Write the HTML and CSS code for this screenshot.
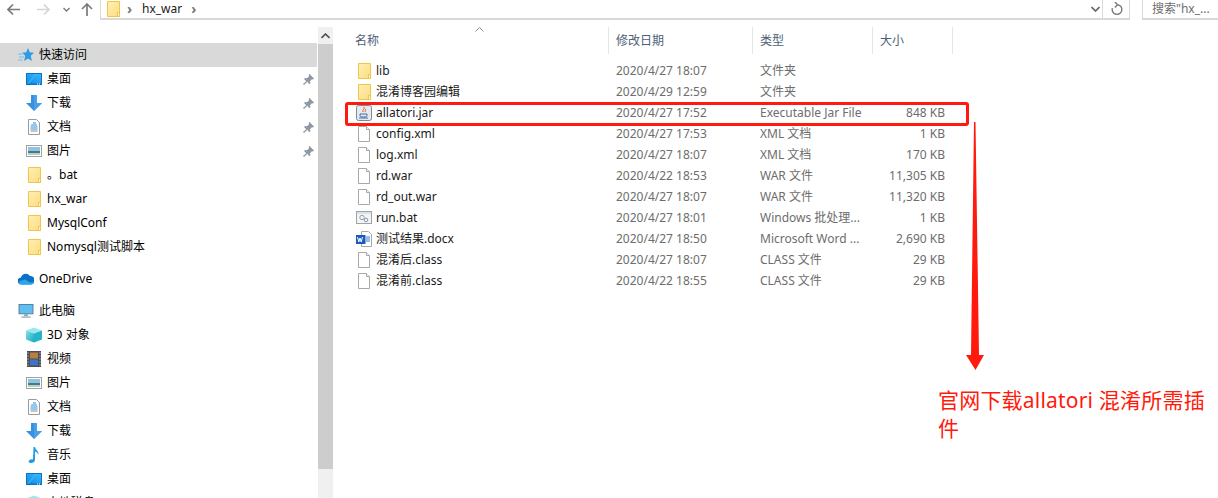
FILE: index.html
```html
<!DOCTYPE html>
<html lang="zh-CN">
<head>
<meta charset="utf-8">
<title>hx_war</title>
<link rel="stylesheet" href="styles.css">
</head>
<body>
<svg class="defs" width="0" height="0" aria-hidden="true">
  <defs>
    <linearGradient id="fg" x1="0" y1="0" x2="1" y2="1"><stop offset="0" stop-color="#fff0b4"/><stop offset="1" stop-color="#fcdc80"/></linearGradient>
    <linearGradient id="dg" x1="0" y1="1" x2="1" y2="0"><stop offset="0" stop-color="#0b8de8"/><stop offset="1" stop-color="#38b6fc"/></linearGradient>
    <linearGradient id="cg" x1="0" y1="0" x2="1" y2="1"><stop offset="0" stop-color="#7fe3e8"/><stop offset="1" stop-color="#1ba7bd"/></linearGradient>
    <symbol id="folder" viewBox="0 0 16 16"><path d="M2.500.5h12v15h-12z" fill="url(#fg)" stroke="#eec64c"/><path d="M12.500 11.500h2v4h-2z" fill="#fff3c8" stroke="#eec64c"/></symbol>
    <symbol id="page" viewBox="0 0 16 16"><path d="M2.500.5h8l3 3v12h-11z" fill="#fff" stroke="#a8a8a8"/><path d="M10.500.5v3h3" fill="#f4f4f4" stroke="#a8a8a8"/></symbol>
    <symbol id="star" viewBox="0 0 16 14"><path d="M10 0l1.800 4.300 4.200.4-3.200 3 1 5.300-3.800-2.500L6.200 13l1-5.300-3-3 4-.4z" fill="#2e9be6"/><path d="M0 6h4.500M1 9h5M0 12h4.500" stroke="#6fbdf0"/></symbol>
    <symbol id="desktop" viewBox="0 0 16 12"><rect width="16" height="12" fill="#0c73c4"/><rect x="1" y="1" width="14" height="9.500" fill="url(#dg)"/><path d="M1 10.500L10 1h1L3 10.500z" fill="#63c4fb" opacity=".6"/><path d="M11 11h1M13 11h1" stroke="#fff"/></symbol>
    <symbol id="down" viewBox="0 0 16 16"><path d="M5 0h6v8h5l-8 8-8-8h5z" fill="#3b8fdf"/><path d="M8 0h3v8h5l-8 8z" fill="#4a9fe9"/></symbol>
    <symbol id="doc" viewBox="0 0 16 16"><path d="M2.500.5h8l3 3v12h-11z" fill="#fff" stroke="#9a9a9a"/><path d="M7 4h3M5 6h6M4.500 8h7M4.500 10h7" stroke="#2f8fdb"/><path d="M4.500 12h7" stroke="#8a8a8a"/></symbol>
    <symbol id="pic" viewBox="0 0 16 12"><rect x=".5" y=".5" width="15" height="11" fill="#fff" stroke="#a2a2a2"/><rect x="2" y="2" width="12" height="4" fill="#8fc3ea"/><rect x="2" y="6" width="12" height="2" fill="#4f7c6a"/><rect x="2" y="8" width="12" height="2" fill="#b7cdd6"/></symbol>
    <symbol id="pin" viewBox="0 0 11 11"><path d="M6.500 0l4.500 4.500-1 1-1-.3-2 2 .3 2-1 1-2-2.500L1 11 0 10l3.200-2.800L1 5l1-1 2 .3 2-2L5.700.8z" fill="#8f9aa5"/></symbol>
    <symbol id="cloud" viewBox="0 0 16 11"><path d="M3.500 11A3.500 3.500 0 0 1 3 4a5 5 0 0 1 9-1.500A4 4 0 0 1 13 11z" fill="#0f6fc6"/><path d="M3.500 11C1 11 0 8.500 2 7.500l5-1.500 5 3 3.800-.5c.5 1.500-.8 2.500-2.800 2.500z" fill="#28a8ea"/></symbol>
    <symbol id="pc" viewBox="0 0 16 15"><rect x=".5" y=".5" width="15" height="10" fill="#5fc0f0" stroke="#4f7f9c"/><path d="M6 11h4v2H6z" fill="#8aa3b3"/><path d="M3 13.500h10v1H3z" fill="#6e8797"/></symbol>
    <symbol id="cube" viewBox="0 0 16 15"><path d="M8 0l8 3-8 3-8-3z" fill="#9be9ee"/><path d="M0 3l8 3v9l-8-3z" fill="url(#cg)"/><path d="M16 3l-8 3v9l8-3z" fill="#25b4c8"/></symbol>
    <symbol id="video" viewBox="0 0 16 16"><rect x="1" width="14" height="16" fill="#4b4f55"/><rect x="4" y="1.500" width="8" height="6" fill="#b77f3f"/><rect x="4" y="8.500" width="8" height="6" fill="#3f74c4"/><path d="M2 1.500v1M2 4.500v1M2 7.500v1M2 10.500v1M2 13.500v1M14 1.500v1M14 4.500v1M14 7.500v1M14 10.500v1M14 13.500v1" stroke="#ddd"/></symbol>
    <symbol id="music" viewBox="0 0 16 16"><path d="M7.500 0h1.500c.5 3 4 4 3.500 8-.5-2-2-3-3.500-3.500V13c0 2-2 3-4 3-2.500 0-3-2-1.500-3 1-.8 2.500-1 3.500-.5z" fill="#1f9be8"/></symbol>
    <symbol id="jar" viewBox="0 0 16 16"><rect x=".5" y=".5" width="15" height="15" rx="2" fill="#e6eaf0" stroke="#7d8998"/><path d="M8 2c1 2-2 3-1 5M10 4c-1 1-1 2-.5 3" stroke="#d9651c" fill="none"/><path d="M4 9h7v1.500c0 1-1 1.500-3.500 1.500S4 11.500 4 10.500zM3 13h9" stroke="#3f6d9c" fill="none"/></symbol>
    <symbol id="bat" viewBox="0 0 16 16"><rect x=".5" y="1.500" width="15" height="12" fill="#f4f4f4" stroke="#9ca3aa"/><rect x="1" y="2" width="14" height="2" fill="#d9e2ea"/><circle cx="6" cy="7.500" r="2.200" fill="none" stroke="#98a1a8"/><circle cx="10" cy="10" r="1.800" fill="none" stroke="#7f9bb5"/></symbol>
    <symbol id="word" viewBox="0 0 16 16"><path d="M5.500.5h7l3 3v12h-10z" fill="#fff" stroke="#a8a8a8"/><path d="M10 6h4M10 8h4M10 10h4" stroke="#2b7cd3"/><rect y="4" width="9.500" height="9" fill="#185abd"/><path d="M1.500 6l1.300 5 1.200-4 1.200 4 1.300-5" stroke="#fff" fill="none"/></symbol>
    <symbol id="close-up" viewBox="0 0 9 6"><path d="M.5 5l4-4 4 4" fill="none" stroke="#505050" stroke-width="1.600"/></symbol>
  </defs>
</svg>

<div class="window">
  <header class="toolbar">
    <div class="nav-buttons">
      <svg class="nav-btn back" viewBox="0 0 13 12"><path d="M6 1L1 6l5 5M1 6h12" fill="none" stroke="currentColor" stroke-width="1.700"/></svg>
      <svg class="nav-btn forward" viewBox="0 0 13 12"><path d="M7 1l5 5-5 5M12 6H0" fill="none" stroke="currentColor" stroke-width="1.700"/></svg>
      <svg class="nav-drop" viewBox="0 0 7 5"><path d="M.5 1l3 3 3-3" fill="none" stroke="currentColor" stroke-width="1.400"/></svg>
      <svg class="nav-btn up" viewBox="0 0 12 13"><path d="M1 6l5-5 5 5M6 1v12" fill="none" stroke="currentColor" stroke-width="1.700"/></svg>
    </div>
    <div class="address">
      <svg class="addr-folder"><use href="#folder"/></svg>
      <span class="crumb-sep">›</span>
      <span class="crumb">hx_war</span>
      <span class="crumb-sep">›</span>
      <svg class="addr-drop" viewBox="0 0 9 6"><path d="M.5 1l4 4 4-4" fill="none" stroke="currentColor" stroke-width="1.700"/></svg>
      <svg class="addr-refresh" viewBox="0 0 12 13"><path d="M6.500 2.500a4.500 4.500 0 1 1-4.300 3.200M4.500 0l2.500 2.500L4.500 5" fill="none" stroke="currentColor" stroke-width="1.300"/></svg>
    </div>
    <div class="search">搜索"hx_...</div>
  </header>

  <div class="main">
    <nav class="sidebar">
      <section class="group">
        <div class="row top active"><svg class="ico-top"><use href="#star"/></svg>快速访问</div>
        <div class="row"><svg class="ico d12"><use href="#desktop"/></svg>桌面<svg class="pin"><use href="#pin"/></svg></div>
        <div class="row"><svg class="ico"><use href="#down"/></svg>下载<svg class="pin"><use href="#pin"/></svg></div>
        <div class="row"><svg class="ico"><use href="#doc"/></svg>文档<svg class="pin"><use href="#pin"/></svg></div>
        <div class="row"><svg class="ico d12"><use href="#pic"/></svg>图片<svg class="pin"><use href="#pin"/></svg></div>
        <div class="row"><svg class="ico"><use href="#folder"/></svg>。bat</div>
        <div class="row"><svg class="ico"><use href="#folder"/></svg>hx_war</div>
        <div class="row"><svg class="ico"><use href="#folder"/></svg>MysqlConf</div>
        <div class="row"><svg class="ico"><use href="#folder"/></svg>Nomysql测试脚本</div>
      </section>
      <section class="group">
        <div class="row top"><svg class="ico-top"><use href="#cloud"/></svg>OneDrive</div>
      </section>
      <section class="group">
        <div class="row top"><svg class="ico-top"><use href="#pc"/></svg>此电脑</div>
        <div class="row"><svg class="ico"><use href="#cube"/></svg>3D 对象</div>
        <div class="row"><svg class="ico"><use href="#video"/></svg>视频</div>
        <div class="row"><svg class="ico d12"><use href="#pic"/></svg>图片</div>
        <div class="row"><svg class="ico"><use href="#doc"/></svg>文档</div>
        <div class="row"><svg class="ico"><use href="#down"/></svg>下载</div>
        <div class="row"><svg class="ico"><use href="#music"/></svg>音乐</div>
        <div class="row"><svg class="ico d12"><use href="#desktop"/></svg>桌面</div>
        <div class="row"><svg class="ico"><use href="#cube"/></svg>本地磁盘 (C:)</div>
      </section>
    </nav>

    <div class="scrollbar">
      <div class="scroll-up"><svg class="scroll-arrow"><use href="#close-up"/></svg></div>
      <div class="scroll-thumb"></div>
      <div class="scroll-track"></div>
    </div>

    <section class="list">
      <div class="list-head">
        <div class="h-cell h-name">名称<svg class="sort" viewBox="0 0 9 5"><path d="M.5 4.500l4-4 4 4" fill="none" stroke="#8a8a8a"/></svg></div>
        <div class="h-cell">修改日期</div>
        <div class="h-cell">类型</div>
        <div class="h-cell">大小</div>
      </div>
      <div class="file"><span class="f-name"><svg class="ico"><use href="#folder"/></svg>lib</span><span class="f-date">2020/4/27 18:07</span><span class="f-type">文件夹</span><span class="f-size"></span></div>
      <div class="file"><span class="f-name"><svg class="ico"><use href="#folder"/></svg>混淆博客园编辑</span><span class="f-date">2020/4/29 12:59</span><span class="f-type">文件夹</span><span class="f-size"></span></div>
      <div class="file"><span class="f-name"><svg class="ico"><use href="#jar"/></svg>allatori.jar</span><span class="f-date">2020/4/27 17:52</span><span class="f-type">Executable Jar File</span><span class="f-size">848 KB</span></div>
      <div class="file"><span class="f-name"><svg class="ico"><use href="#page"/></svg>config.xml</span><span class="f-date">2020/4/27 17:53</span><span class="f-type">XML 文档</span><span class="f-size">1 KB</span></div>
      <div class="file"><span class="f-name"><svg class="ico"><use href="#page"/></svg>log.xml</span><span class="f-date">2020/4/27 18:07</span><span class="f-type">XML 文档</span><span class="f-size">170 KB</span></div>
      <div class="file"><span class="f-name"><svg class="ico"><use href="#page"/></svg>rd.war</span><span class="f-date">2020/4/22 18:53</span><span class="f-type">WAR 文件</span><span class="f-size">11,305 KB</span></div>
      <div class="file"><span class="f-name"><svg class="ico"><use href="#page"/></svg>rd_out.war</span><span class="f-date">2020/4/27 18:07</span><span class="f-type">WAR 文件</span><span class="f-size">11,320 KB</span></div>
      <div class="file"><span class="f-name"><svg class="ico"><use href="#bat"/></svg>run.bat</span><span class="f-date">2020/4/27 18:01</span><span class="f-type">Windows 批处理...</span><span class="f-size">1 KB</span></div>
      <div class="file"><span class="f-name"><svg class="ico"><use href="#word"/></svg>测试结果.docx</span><span class="f-date">2020/4/27 18:50</span><span class="f-type">Microsoft Word ...</span><span class="f-size">2,690 KB</span></div>
      <div class="file"><span class="f-name"><svg class="ico"><use href="#page"/></svg>混淆后.class</span><span class="f-date">2020/4/27 18:07</span><span class="f-type">CLASS 文件</span><span class="f-size">29 KB</span></div>
      <div class="file"><span class="f-name"><svg class="ico"><use href="#page"/></svg>混淆前.class</span><span class="f-date">2020/4/22 18:55</span><span class="f-type">CLASS 文件</span><span class="f-size">29 KB</span></div>
    </section>
  </div>

  <div class="mark-box"></div>
  <svg class="mark-arrow" viewBox="0 0 18 248"><path d="M8 0h1.500L13 233h5l-8.500 15L0 233h5z" fill="#ff1a0d"/></svg>
  <p class="mark-note">官网下载allatori 混淆所需插件</p>
</div>
</body>
</html>
```

FILE: styles.css
```css
* { box-sizing: border-box; }
html, body { margin: 0; height: 100%; background: #fff; }
.defs { position: absolute; }
.window {
  position: relative;
  width: 1218px;
  height: 498px;
  overflow: hidden;
  font: 12px/1 "Noto Sans", "Noto Sans CJK SC", sans-serif;
  color: #000;
  background: #fff;
}

/* toolbar */
.toolbar { display: flex; height: 20px; }
.nav-buttons { display: flex; align-items: center; width: 100px; height: 18px; color: #7a7a7a; padding-left: 7px; }
.nav-btn { width: 13px; height: 13px; flex: none; }
.forward { margin-left: 17px; color: #d6d6d6; }
.nav-drop { width: 7px; height: 5px; margin-left: 13px; }
.up { margin-left: 11px; width: 12px; }
.address {
  display: flex;
  align-items: center;
  width: 1030px;
  height: 20px;
  border-left: 1px solid #d9d9d9;
  border-right: 1px solid #d9d9d9;
  border-bottom: 2px solid #d9d9d9;
  padding-left: 4px;
  color: #1a1a1a;
}
.addr-folder { width: 16px; height: 16px; flex: none; }
.crumb-sep { width: 7px; margin-left: 6px; color: #777; font-size: 14px; font-weight: 700; }
.crumb { margin-left: 8px; margin-right: 3px; font-size: 12px; }
.addr-drop { width: 9px; height: 6px; margin-left: auto; color: #666; }
.addr-refresh {
  width: 28px;
  height: 18px;
  padding: 2px 7px;
  margin-left: 2px;
  border-left: 1px solid #d9d9d9;
  margin-right: -1px;
  color: #7a7a7a;
  flex: none;
}
.search {
  width: 76px;
  height: 20px;
  margin-left: 12px;
  border-left: 1px solid #d9d9d9;
  border-bottom: 2px solid #d9d9d9;
  padding: 3px 0 0 9px;
  color: #6d6d6d;
  white-space: nowrap;
}

/* layout */
.main { display: flex; height: 478px; }

/* sidebar */
.sidebar { width: 318px; flex: none; padding-top: 23px; }
.group + .group { margin-top: 8px; }
.row { display: flex; align-items: center; height: 24px; width: 317px; padding-left: 26px; }
.row.top { padding-left: 18px; }
.row.active { background: #d9d9d9; }
.ico { width: 16px; height: 16px; flex: none; margin-right: 5px; }
.ico.d12 { height: 12px; }
.ico-top { width: 16px; height: 14px; flex: none; margin-right: 5px; }
.pin { width: 11px; height: 11px; margin-left: auto; margin-right: 3px; }

/* scrollbar */
.scrollbar { display: flex; flex-direction: column; width: 15px; margin-top: 7px; flex: none; background: #f0f0f0; }
.scroll-up { height: 17px; display: flex; align-items: center; justify-content: center; }
.scroll-arrow { width: 9px; height: 6px; }
.scroll-thumb { height: 425px; background: #cdcdcd; }
.scroll-track { flex: 1; }

/* list */
.list { flex: 1; padding: 7px 0 0 22px; }
.list-head, .file { display: grid; grid-template-columns: 254px 144px 120px 80px; }
.list-head { height: 27px; margin-bottom: 6px; }
.h-cell { position: relative; display: flex; align-items: center; padding-left: 7px; color: #4d6078; border-right: 1px solid #e5e5e5; }
.h-name { padding-left: 0; }
.sort { position: absolute; left: 120px; top: 0; width: 9px; height: 5px; }
.file { height: 21px; align-items: center; color: #6d6d6d; }
.f-name { display: flex; align-items: center; padding-left: 1px; color: #1a1a1a; white-space: nowrap; }
.f-name .ico { margin-right: 4px; }
.f-date, .f-type { padding-left: 7px; white-space: nowrap; }
.f-size { text-align: right; padding-right: 8px; }

/* annotations drawn over the screenshot */
.mark-box {
  position: absolute;
  left: 345px;
  top: 102px;
  width: 624px;
  height: 24px;
  border: 3px solid #ff1a0d;
  border-radius: 3px;
}
.mark-arrow { position: absolute; left: 966px; top: 122px; width: 18px; height: 248px; }
.mark-note {
  position: absolute;
  left: 938px;
  top: 386px;
  width: 272px;
  margin: 0;
  font-size: 21px;
  line-height: 28px;
  letter-spacing: .2px;
  color: #ff1a0d;
}
```
